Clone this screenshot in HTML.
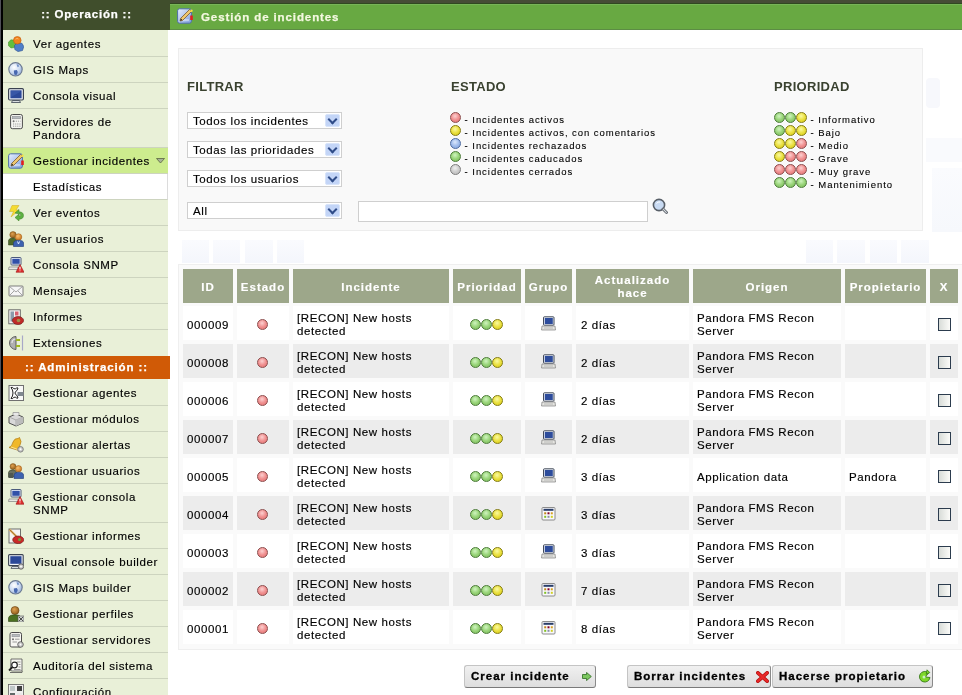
<!DOCTYPE html>
<html><head><meta charset="utf-8">
<style>
*{margin:0;padding:0;box-sizing:border-box}
html,body{width:962px;height:695px;overflow:hidden;background:#fff}
body{will-change:transform}
.mi,.td,.sel{-webkit-text-stroke:0.15px #000}
#title{-webkit-text-stroke:0.25px #f4f8e0}
#ophead,#adhead{-webkit-text-stroke:0.25px #fff}
body{position:relative;font-family:"Liberation Sans",sans-serif;font-size:11.5px;letter-spacing:0.6px;color:#000}
#side{position:absolute;left:0;top:0;width:168px;height:695px;background:#e9f0d8}
#lborder{z-index:5;position:absolute;left:0;top:0;width:3px;height:695px;background:#000;border-left:1px solid #505058}
#ophead{position:absolute;left:0;top:0;width:170px;height:30px;background:#404e2c;color:#fff;font-weight:bold;text-align:center;line-height:29px;letter-spacing:0.8px;padding-left:3px}
.menu{position:absolute;left:3px;width:165px}
.mi{position:relative;height:26px;border-bottom:1px solid #cdd4bf;padding:7px 0 0 30px;line-height:13px;white-space:nowrap}
.mi.two{height:39px}
.mi.act{background:#cdec8e}
.mi.sub{background:#fff;border-right:1px solid #dcdcdc}
.mi svg{position:absolute;left:5px;top:5px}
#adhead{position:absolute;left:3px;top:356px;width:167px;height:23px;background:#d05a06;color:#fff;font-weight:bold;text-align:center;line-height:22px;letter-spacing:0.9px}
#topstrip{position:absolute;left:170px;top:0;width:792px;height:4px;background:#464c36;box-shadow:inset 0 -1px 0 #304820}
#title{position:absolute;left:170px;top:4px;width:792px;height:26px;background:#68a942;box-shadow:inset 0 1px 0 #78b458,inset 0 -1px 0 #5c8c44;color:#f4f8e0;font-weight:bold;letter-spacing:0.9px;line-height:13px;padding:7px 0 0 31px}
#title svg{position:absolute;left:7px;top:4px}
#filter{position:absolute;left:178px;top:48px;width:745px;height:183px;background:#f9f9f9;border:1px solid #ededed}
.h2{position:absolute;font-weight:bold;font-size:13px;letter-spacing:0.3px;color:#3a4230;line-height:13px}
.sel{position:absolute;left:187px;width:155px;height:17px;background:#fff;border:1px solid #cfcfcf;padding:1px 0 0 5px;line-height:14px;white-space:nowrap}
.sel .btn{position:absolute;right:1px;top:1px;width:15px;height:13px;background:#c3d5f7;border:1px solid #d8e4fa;border-radius:2px}
.sel .btn:after{content:"";position:absolute;left:3px;top:1px;width:5px;height:5px;border-right:2px solid #2f4c88;border-bottom:2px solid #2f4c88;transform:rotate(45deg)}
#txt{position:absolute;left:358px;top:201px;width:290px;height:21px;background:#fff;border:1px solid #cfcfcf}
.leg{position:absolute;font-size:9.5px;letter-spacing:0.95px;line-height:13px;white-space:nowrap}
.leg i{font-style:normal;position:relative;top:1px;-webkit-text-stroke:0.1px #000}
.dot{display:inline-block;width:11px;height:11px;border-radius:50%;vertical-align:top}
.r{background:radial-gradient(circle at 45% 35%,#fcd0d0 0,#f09090 50%,#e07070 100%);border:1px solid #8c4c4c}
.y{background:radial-gradient(circle at 45% 35%,#fafaa0 0,#eae040 50%,#d4c810 100%);border:1px solid #847c10}
.g{background:radial-gradient(circle at 45% 35%,#d0f4c0 0,#98d478 50%,#78b858 100%);border:1px solid #4c7c38}
.b{background:radial-gradient(circle at 45% 35%,#dce8fc 0,#a0bcec 50%,#80a0d8 100%);border:1px solid #4c6aa0}
.k{background:radial-gradient(circle at 45% 35%,#f0f0f0 0,#cccccc 50%,#b8b8b8 100%);border:1px solid #7c7c7c}
#tbl{position:absolute;left:178px;top:264px;width:790px;height:386px;border:1px solid #efefef;border-right:none;background:#fafafa}
table{position:absolute;left:183px;top:269px;border-collapse:separate;border-spacing:0}
td,th{position:absolute}
.th{position:absolute;background:#9da78a;color:#fff;font-weight:bold;text-align:center;letter-spacing:1px;line-height:13px;display:flex;align-items:center;justify-content:center;padding-top:2px;-webkit-text-stroke:0.15px #fff}
.td{position:absolute;height:34px;line-height:13px;display:flex;align-items:center;white-space:nowrap;padding:4px 0 0 4px}
.w{background:#fff}
.gr{background:#ececec}
.c{justify-content:center;padding:2px 1px 0 0}
.td svg{margin-top:-2px}
.cb{margin-left:1px;width:13px;height:13px;border:1px solid #2c3c4e;background:linear-gradient(90deg,#d8dcd8,#fbfbf8)}
.bt{position:absolute;top:665px;height:23px;border:1px solid #c4c4c4;border-right-color:#8a8a8a;border-bottom-color:#7a7a7a;border-radius:3px;background:linear-gradient(#f0f0f0,#dedede);font-weight:bold;letter-spacing:1px;line-height:13px;padding:4px 0 0 6px;white-space:nowrap;-webkit-text-stroke:0.3px #000}
.bt svg{position:absolute;top:3px}
</style></head><body>
<svg width="0" height="0" style="position:absolute">
<defs>
<radialGradient id="gGlobe" cx="40%" cy="35%" r="70%"><stop offset="0" stop-color="#ffffff"/><stop offset="0.6" stop-color="#c8d8f0"/><stop offset="1" stop-color="#8aa4d0"/></radialGradient>
<linearGradient id="gEdit" x1="0" y1="0" x2="1" y2="1"><stop offset="0" stop-color="#e8f0ff"/><stop offset="1" stop-color="#7f9fdc"/></linearGradient>
<radialGradient id="gOr" cx="40%" cy="35%" r="70%"><stop offset="0" stop-color="#f8c070"/><stop offset="1" stop-color="#c8701a"/></radialGradient>
<radialGradient id="gBrown" cx="40%" cy="35%" r="70%"><stop offset="0" stop-color="#e0a050"/><stop offset="1" stop-color="#8a5a18"/></radialGradient>
<symbol id="agents" viewBox="0 0 16 16">
 <path d="M0.5 6 L3 3.8 L6.5 4.2 L8 7.5 L6.5 11.5 L3 12 L0.3 9.5Z" fill="#62be3e" stroke="#3c8a24" stroke-width="0.5"/>
 <path d="M6.5 9.5 L9 7 L14 7.3 L15.8 10.5 L14.5 14.5 L10 15.6 L6.8 13.5Z" fill="#4f7ec8" stroke="#2c4f90" stroke-width="0.6"/>
 <circle cx="9.3" cy="4.3" r="3.8" fill="#f2841c" stroke="#c05a10" stroke-width="0.6"/>
 <path d="M7.5 3.2 Q9 1.8 10.5 3" stroke="#ffc080" stroke-width="0.8" fill="none"/>
</symbol>
<symbol id="globe" viewBox="0 0 16 16">
 <circle cx="7.5" cy="7.3" r="6.7" fill="url(#gGlobe)" stroke="#6a7890" stroke-width="1.1"/>
 <path d="M5.8 8.5 L8.8 8 L9.8 10 L8.8 12.8 L6.8 13 L6 11Z" fill="#4868b0"/>
 <path d="M8.5 2.2 L10.5 2.5 L11 4.5 L9.6 5.2Z" fill="#7090c8"/>
</symbol>
<symbol id="monitor" viewBox="0 0 16 16">
 <rect x="0.6" y="0.6" width="14.8" height="11.4" rx="1.2" fill="#eef2f8" stroke="#3a4250" stroke-width="1.2"/>
 <rect x="2.4" y="2.3" width="11.2" height="8" fill="#2b4898"/>
 <path d="M3 3 L12 3 L12 4 L3 9Z" fill="#4060b0" opacity="0.6"/>
 <path d="M4.5 12.5 L11.5 12.5 L12.5 14.5 L3.5 14.5Z" fill="#d8dce0" stroke="#3a4250" stroke-width="0.8"/>
</symbol>
<symbol id="servers" viewBox="0 0 16 16">
 <rect x="2.6" y="0.5" width="11.8" height="14.2" rx="1.8" fill="#f6f6f2" stroke="#4a4a4a" stroke-width="1"/>
 <rect x="4.5" y="2.2" width="8" height="2.6" fill="#b8bcc0" stroke="#808488" stroke-width="0.5"/>
 <circle cx="5.6" cy="7.3" r="1" fill="#707070"/>
 <path d="M7.8 7.2 H12.5 M5 10 H12.5 M5 12.2 H12.5" stroke="#909090" stroke-width="0.9" stroke-dasharray="1.2 0.9"/>
</symbol>
<symbol id="edit" viewBox="0 0 16 16">
 <rect x="0.6" y="0.8" width="13.8" height="14.4" rx="2" fill="url(#gEdit)" stroke="#4f6ea8" stroke-width="1"/>
 <path d="M2.5 12 H12" stroke="#fff" stroke-width="1" opacity="0.8"/>
 <path d="M3.5 10.5 L12.5 1.5 L14.5 3.5 L5.5 12.5 L3 13Z" fill="#f0c870" stroke="#6a4a20" stroke-width="0.7"/>
 <path d="M3.2 12.8 L4 10.6 L5.4 12Z" fill="#202020"/>
 <rect x="13.2" y="7.5" width="2.6" height="4.5" fill="#e02020"/>
 <circle cx="14.5" cy="2.8" r="1.2" fill="#f8e040"/>
</symbol>
<symbol id="events" viewBox="0 0 16 16">
 <path d="M4 0.5 L11 0.5 L8 5 L11 5 L3 12 L5.5 6.5 L1.5 6.5Z" fill="#f4dc30" stroke="#d0a820" stroke-width="0.5"/>
 <path d="M7 8 L11 4.5 L11 6.8 Q15.5 7 15.5 10.5 Q15.5 14 11 14.2 L11 16 L7 12.5 L11 9 L11 11 Q13 10.8 12.8 10 Q12.5 8.8 11 9 Z" fill="#5cb040" stroke="#3c8028" stroke-width="0.5"/>
</symbol>
<symbol id="users" viewBox="0 0 16 16">
 <circle cx="5" cy="3.8" r="3.2" fill="url(#gBrown)" stroke="#7a4a10" stroke-width="0.5"/>
 <path d="M0.5 14 L0.5 9.5 Q0.8 7 5 7 Q8 7 8.5 9 L8.5 14Z" fill="#4e6a2a" stroke="#2a3a14" stroke-width="0.5"/>
 <circle cx="10.5" cy="6" r="3.3" fill="url(#gOr)" stroke="#9a5a10" stroke-width="0.5"/>
 <path d="M5.5 15.5 L5.5 12 Q5.8 9.3 10.5 9.3 Q15.5 9.3 15.5 12 L15.5 15.5Z" fill="#3d62b0" stroke="#1e3a78" stroke-width="0.6"/>
 <path d="M9.5 10.5 L10.5 13 L11.5 10.5" stroke="#e8f0ff" stroke-width="0.9" fill="none"/>
</symbol>
<symbol id="snmp" viewBox="0 0 16 16">
 <rect x="3" y="0.5" width="10" height="7.5" rx="0.8" fill="#eef2fa" stroke="#3a4a70" stroke-width="0.9"/>
 <rect x="4.3" y="1.8" width="7.4" height="5" fill="#3050a8"/>
 <path d="M1 10 H10 L10.5 12.5 H0.5Z" fill="#e8e8e4" stroke="#707070" stroke-width="0.6"/>
 <path d="M12 7.5 L16 15.2 L8 15.2Z" fill="#e03030" stroke="#a01010" stroke-width="0.6"/>
 <path d="M12 9.8 V12.5 M12 13.4 V14.3" stroke="#fff" stroke-width="1.1"/>
</symbol>
<symbol id="mail" viewBox="0 0 16 16">
 <rect x="1" y="3" width="14" height="10" rx="0.8" fill="#f6f6f6" stroke="#707070" stroke-width="0.9"/>
 <path d="M1.5 3.5 L8 9 L14.5 3.5 M1.5 12.5 L6 8 M14.5 12.5 L10 8" stroke="#909090" stroke-width="0.8" fill="none"/>
</symbol>
<symbol id="reports" viewBox="0 0 16 16">
 <rect x="0.8" y="0.8" width="11.5" height="14" fill="#f4f4f4" stroke="#606060" stroke-width="0.9"/>
 <rect x="2.5" y="2.5" width="3.5" height="10" fill="#8a9aac"/>
 <rect x="7" y="2.5" width="3.5" height="4" fill="#d86070"/>
 <ellipse cx="10" cy="11.5" rx="5.6" ry="4" fill="#c02a28" stroke="#6a1010" stroke-width="0.6"/>
 <circle cx="10.5" cy="11.5" r="1.8" fill="#a0904a"/>
</symbol>
<symbol id="ext" viewBox="0 0 16 16">
 <path d="M8 1.5 A6.5 6.5 0 0 0 8 14.5Z" fill="#b0b0b0" stroke="#505050" stroke-width="0.9"/>
 <path d="M7.5 4 A4 4 0 0 0 4 8" stroke="#e8e8e8" stroke-width="1.2" fill="none"/>
 <path d="M8 5 H12 M8 11 H12" stroke="#a0b820" stroke-width="2"/>
 <path d="M14.5 0.5 V15.5" stroke="#a8a8c8" stroke-width="1.2"/>
</symbol>
<symbol id="magents" viewBox="0 0 16 16">
 <rect x="1" y="0.5" width="14.5" height="15" fill="#f8f8f8" stroke="#707070" stroke-width="1"/>
 <path d="M3 2.5 Q5 1.8 5.5 3.5 L7.5 4 Q8.5 2 10 3 L9 5.5 Q7 6.5 7 8 Q7 9.5 9 10.5 L10 13 Q8.5 14 7.5 12 L5.5 12.5 Q5 14.2 3 13.5 L4.5 11 Q5.5 8 4.5 5Z" fill="#fff" stroke="#202020" stroke-width="1"/>
 <rect x="9.5" y="7" width="6" height="4" fill="#808890"/>
</symbol>
<symbol id="modules" viewBox="0 0 16 16">
 <path d="M1 6 L8 3 L15 6 L15 12 L8 15 L1 12Z" fill="#d8d8d8" stroke="#505050" stroke-width="1"/>
 <path d="M1 6 L8 9 L15 6 M8 9 V15" stroke="#9a9a9a" stroke-width="0.7" fill="none"/>
 <path d="M8 9 L15 6 L15 12 L8 15Z" fill="#bcbcbc"/>
 <path d="M5 4 V1.5 H11 V4.3" fill="#e8e8e8" stroke="#909090" stroke-width="0.7"/>
</symbol>
<symbol id="alerts" viewBox="0 0 16 16">
 <path d="M1 10.5 Q4 9.5 5 5 Q6.5 1 10 1.5 L11.5 0.5 L12 2 Q14 4 12 8 Q10.5 11 11 13.5Z" fill="#f0b828" stroke="#b07810" stroke-width="0.7"/>
 <path d="M3 10 L10.5 12.8" stroke="#fff0b0" stroke-width="0.8"/>
 <circle cx="12.5" cy="12.3" r="2.8" fill="#c8c8c8" stroke="#707070" stroke-width="0.8"/>
 <circle cx="12.5" cy="12.3" r="1" fill="#fff"/>
</symbol>
<symbol id="musers" viewBox="0 0 16 16">
 <circle cx="5" cy="3.6" r="3" fill="url(#gBrown)" stroke="#7a4a10" stroke-width="0.5"/>
 <path d="M0.5 14 L0.5 9.5 Q0.8 6.8 5 6.8 Q8 6.8 8.5 9 L8.5 14Z" fill="#6a7060" stroke="#2a3a14" stroke-width="0.5"/>
 <circle cx="10.5" cy="5.8" r="3.2" fill="url(#gOr)" stroke="#9a5a10" stroke-width="0.5"/>
 <path d="M6 15.5 L6 12 Q6.3 9.2 10.5 9.2 Q15.5 9.2 15.5 12 L15.5 15.5Z" fill="#3d62b0" stroke="#1e3a78" stroke-width="0.6"/>
 <rect x="0.5" y="10" width="4.5" height="5" fill="#505850"/>
</symbol>
<symbol id="mreports" viewBox="0 0 16 16">
 <rect x="1" y="1" width="11.5" height="14" fill="#f4f4f4" stroke="#606060" stroke-width="0.9"/>
 <path d="M1.5 1.5 L9 9" stroke="#e0b060" stroke-width="2.2"/>
 <path d="M1.5 1.5 L9 9" stroke="#704010" stroke-width="0.5"/>
 <ellipse cx="10.2" cy="11.8" rx="5.5" ry="3.8" fill="#c82a28" stroke="#6a1010" stroke-width="0.6"/>
 <circle cx="11.5" cy="11.5" r="1.5" fill="#70a040"/>
</symbol>
<symbol id="vcb" viewBox="0 0 16 16">
 <rect x="0.6" y="0.6" width="14.6" height="11" rx="1" fill="#eef2f8" stroke="#3a4250" stroke-width="1.1"/>
 <rect x="2.3" y="2.2" width="11.2" height="7.6" fill="#2b4898"/>
 <path d="M4 12.5 H10 L11 14.5 H3Z" fill="#d8dce0" stroke="#3a4250" stroke-width="0.7"/>
 <circle cx="13" cy="12.5" r="2.7" fill="#c8c8c8" stroke="#505050" stroke-width="0.8"/>
 <circle cx="13" cy="12.5" r="0.9" fill="#fff"/>
</symbol>
<symbol id="profiles" viewBox="0 0 16 16">
 <circle cx="7" cy="4.5" r="4" fill="url(#gBrown)" stroke="#6a4010" stroke-width="0.6"/>
 <path d="M0.5 15.5 L0.5 12 Q1 8.8 7 8.8 Q12.5 8.8 13 12 L13 15.5Z" fill="#4a7020" stroke="#2a4010" stroke-width="0.6"/>
 <rect x="10" y="10" width="6" height="6" fill="#d0d4d0" stroke="#505050" stroke-width="0.6"/>
 <path d="M11 11 L15 15 M15 11 L11 15" stroke="#404040" stroke-width="0.9"/>
</symbol>
<symbol id="mservers" viewBox="0 0 16 16">
 <rect x="2" y="0.5" width="11.5" height="14.5" rx="1.8" fill="#f6f6f2" stroke="#4a4a4a" stroke-width="1"/>
 <rect x="4" y="2.2" width="7.5" height="2.6" fill="#b8bcc0" stroke="#808488" stroke-width="0.5"/>
 <circle cx="5" cy="7.3" r="1" fill="#707070"/>
 <path d="M7 7.2 H11.5 M4.5 10 H9" stroke="#909090" stroke-width="0.9"/>
 <circle cx="12.5" cy="12.5" r="2.8" fill="#c8c8c8" stroke="#505050" stroke-width="0.8"/>
 <circle cx="12.5" cy="12.5" r="0.9" fill="#fff"/>
</symbol>
<symbol id="audit" viewBox="0 0 16 16">
 <path d="M3 1 H14 V13 H4 Q2.5 13 2.5 11.5Z" fill="#f6f6f0" stroke="#505050" stroke-width="0.8"/>
 <path d="M2 14.5 H14 Q15 14 14 13" fill="none" stroke="#505050" stroke-width="0.8"/>
 <path d="M9 4 H12.5 M10.5 6.5 H12.5 M10.5 9 H12.5 M6 11.5 H12.5" stroke="#808080" stroke-width="0.8"/>
 <circle cx="6.5" cy="7" r="2.8" fill="#fff" stroke="#202020" stroke-width="1.2"/>
 <path d="M4.5 9 L1 12.5" stroke="#202020" stroke-width="1.8"/>
</symbol>
<symbol id="config" viewBox="0 0 16 16">
 <rect x="0.5" y="0.5" width="15" height="15" fill="#f0f0f0" stroke="#606060" stroke-width="0.8"/>
 <rect x="2" y="2" width="5" height="5" fill="#c0c8c8"/>
 <rect x="9" y="2" width="5" height="5" fill="#404040"/>
 <rect x="2" y="9" width="5" height="5" fill="#606868"/>
 <rect x="9" y="9" width="5" height="5" fill="#e8e8e8"/>
</symbol>
<symbol id="ipc" viewBox="0 0 15 15">
 <rect x="2.5" y="0.8" width="10.5" height="8.4" rx="0.8" fill="#e8eef8" stroke="#303848" stroke-width="0.9"/>
 <rect x="3.8" y="2" width="8" height="6" fill="#2d4c9c"/>
 <path d="M1 10 H14 L14.5 14 H0.5Z" fill="#e4e4e0" stroke="#808080" stroke-width="0.7"/>
 <path d="M3 12 H12" stroke="#b0b0b0" stroke-width="0.8"/>
</symbol>
<symbol id="ical" viewBox="0 0 15 15">
 <rect x="1" y="1.5" width="13" height="12.5" rx="1" fill="#f8f8fc" stroke="#808080" stroke-width="0.9"/>
 <rect x="2.5" y="2.8" width="10" height="2" fill="#283c68"/>
 <rect x="3.2" y="6.3" width="2" height="2" fill="#c08818"/><rect x="6.5" y="6.3" width="2" height="2" fill="#800028"/><rect x="9.8" y="6.3" width="2" height="2" fill="#d8a020"/>
 <rect x="3.2" y="9.8" width="2" height="2" fill="#80c020"/><rect x="6.5" y="9.8" width="2" height="2" fill="#8890a8"/><rect x="9.8" y="9.8" width="2" height="2" fill="#d0d020"/>
</symbol>
<symbol id="arrow" viewBox="0 0 11 10">
 <path d="M0.5 2.8 H5 V0.5 L10.3 5 L5 9.5 V7.2 H0.5Z" fill="#7cc860" stroke="#2c6a20" stroke-width="0.9" stroke-linejoin="round"/>
</symbol>
<symbol id="xred" viewBox="0 0 14 13">
 <path d="M2 2 L12 11 M12 2 L2 11" stroke="#b01010" stroke-width="4" stroke-linecap="round"/>
 <path d="M2 2 L12 11 M12 2 L2 11" stroke="#e82828" stroke-width="2.6" stroke-linecap="round"/>
</symbol>
<symbol id="refresh" viewBox="0 0 13 14">
 <path d="M10.5 4 A5.3 5.3 0 1 0 12 8.5 L7.5 8 L8.8 6.2 Z" fill="#7ed82a" stroke="#2c7010" stroke-width="0.8"/>
 <path d="M9 0.8 L11.8 3.6 L8.2 5.2Z" fill="#7ed82a" stroke="#2c7010" stroke-width="0.7"/>
 <circle cx="6" cy="8" r="1.5" fill="#c8f0c0"/>
</symbol>
<symbol id="search" viewBox="0 0 16 16">
 <circle cx="7" cy="7" r="5.6" fill="#c8daf2" stroke="#585f68" stroke-width="1.6"/>
 <path d="M4.5 5.5 Q6 3.5 8 4" stroke="#fff" stroke-width="1" fill="none"/>
 <path d="M11 11 L14.5 14.5" stroke="#585f68" stroke-width="2.8" stroke-linecap="round"/>
 <path d="M11.2 11.2 L14.3 14.3" stroke="#d8dce0" stroke-width="1.2" stroke-linecap="round"/>
</symbol>
</defs>
</svg>
<div id="side"></div>
<div id="lborder"></div>
<div id="ophead">:: Operación ::</div>
<div class="menu" style="top:31px">
 <div class="mi"><svg width="16" height="16"><use href="#agents"/></svg>Ver agentes</div>
 <div class="mi"><svg width="16" height="16"><use href="#globe"/></svg>GIS Maps</div>
 <div class="mi"><svg width="16" height="16"><use href="#monitor"/></svg>Consola visual</div>
 <div class="mi two"><svg width="16" height="16"><use href="#servers"/></svg>Servidores de<br>Pandora</div>
 <div class="mi act"><svg width="16" height="16"><use href="#edit"/></svg>Gestionar incidentes<svg style="left:153px;top:10px" width="9" height="6"><path d="M0.5 0.5 L8.5 0.5 L4.5 5Z" fill="#a8b498" stroke="#5a6440" stroke-width="0.8"/></svg></div>
 <div class="mi sub">Estadísticas</div>
 <div class="mi"><svg width="16" height="16"><use href="#events"/></svg>Ver eventos</div>
 <div class="mi"><svg width="16" height="16"><use href="#users"/></svg>Ver usuarios</div>
 <div class="mi"><svg width="16" height="16"><use href="#snmp"/></svg>Consola SNMP</div>
 <div class="mi"><svg width="16" height="16"><use href="#mail"/></svg>Mensajes</div>
 <div class="mi"><svg width="16" height="16"><use href="#reports"/></svg>Informes</div>
 <div class="mi" style="border-bottom:none"><svg width="16" height="16"><use href="#ext"/></svg>Extensiones</div>
</div>
<div id="adhead">:: Administración ::</div>
<div class="menu" style="top:380px">
 <div class="mi"><svg width="16" height="16"><use href="#magents"/></svg>Gestionar agentes</div>
 <div class="mi"><svg width="16" height="16"><use href="#modules"/></svg>Gestionar módulos</div>
 <div class="mi"><svg width="16" height="16"><use href="#alerts"/></svg>Gestionar alertas</div>
 <div class="mi"><svg width="16" height="16"><use href="#musers"/></svg>Gestionar usuarios</div>
 <div class="mi two"><svg width="16" height="16"><use href="#snmp"/></svg>Gestionar consola<br>SNMP</div>
 <div class="mi"><svg width="16" height="16"><use href="#mreports"/></svg>Gestionar informes</div>
 <div class="mi"><svg width="16" height="16"><use href="#vcb"/></svg>Visual console builder</div>
 <div class="mi"><svg width="16" height="16"><use href="#globe"/></svg>GIS Maps builder</div>
 <div class="mi"><svg width="16" height="16"><use href="#profiles"/></svg>Gestionar perfiles</div>
 <div class="mi"><svg width="16" height="16"><use href="#mservers"/></svg>Gestionar servidores</div>
 <div class="mi"><svg width="16" height="16"><use href="#audit"/></svg>Auditoría del sistema</div>
 <div class="mi"><svg width="16" height="16"><use href="#config"/></svg>Configuración</div>
</div>

<div id="topstrip"></div>
<div id="title"><svg width="16" height="16"><use href="#edit"/></svg>Gestión de incidentes</div>

<div id="filter"></div>
<div class="h2" style="left:187px;top:80px">FILTRAR</div>
<div class="h2" style="left:451px;top:80px">ESTADO</div>
<div class="h2" style="left:774px;top:80px">PRIORIDAD</div>
<div class="sel" style="top:112px">Todos los incidentes<span class="btn"></span></div>
<div class="sel" style="top:141px">Todas las prioridades<span class="btn"></span></div>
<div class="sel" style="top:170px">Todos los usuarios<span class="btn"></span></div>
<div class="sel" style="top:202px">All<span class="btn"></span></div>
<div id="txt"></div>
<svg style="position:absolute;left:652px;top:198px" width="16" height="16"><use href="#search"/></svg>

<div class="leg" style="left:450px;top:112px">
<div><span class="dot r"></span><i> - Incidentes activos</i></div>
<div><span class="dot y"></span><i> - Incidentes activos, con comentarios</i></div>
<div><span class="dot b"></span><i> - Incidentes rechazados</i></div>
<div><span class="dot g"></span><i> - Incidentes caducados</i></div>
<div><span class="dot k"></span><i> - Incidentes cerrados</i></div>
</div>
<div class="leg" style="left:774px;top:112px">
<div><span class="dot g"></span><span class="dot g"></span><span class="dot y"></span><i> - Informativo</i></div>
<div><span class="dot g"></span><span class="dot y"></span><span class="dot y"></span><i> - Bajo</i></div>
<div><span class="dot y"></span><span class="dot y"></span><span class="dot r"></span><i> - Medio</i></div>
<div><span class="dot y"></span><span class="dot r"></span><span class="dot r"></span><i> - Grave</i></div>
<div><span class="dot r"></span><span class="dot r"></span><span class="dot r"></span><i> - Muy grave</i></div>
<div><span class="dot g"></span><span class="dot g"></span><span class="dot g"></span><i> - Mantenimiento</i></div>
</div>

<div style="position:absolute;left:182px;top:240px;width:27px;height:23px;background:linear-gradient(#fafbfe,#f4f6fc)"></div>
<div style="position:absolute;left:213px;top:240px;width:27px;height:23px;background:linear-gradient(#fafbfe,#f4f6fc)"></div>
<div style="position:absolute;left:245px;top:240px;width:28px;height:23px;background:linear-gradient(#fafbfe,#f4f6fc)"></div>
<div style="position:absolute;left:277px;top:240px;width:27px;height:23px;background:linear-gradient(#fafbfe,#f4f6fc)"></div>
<div style="position:absolute;left:806px;top:240px;width:27px;height:23px;background:linear-gradient(#fafbfe,#f4f6fc)"></div>
<div style="position:absolute;left:837px;top:240px;width:28px;height:23px;background:linear-gradient(#fafbfe,#f4f6fc)"></div>
<div style="position:absolute;left:870px;top:240px;width:27px;height:23px;background:linear-gradient(#fafbfe,#f4f6fc)"></div>
<div style="position:absolute;left:901px;top:240px;width:28px;height:23px;background:linear-gradient(#fafbfe,#f4f6fc)"></div>
<div style="position:absolute;left:926px;top:78px;width:14px;height:30px;background:#f7f8fc;border-radius:4px"></div>
<div style="position:absolute;left:932px;top:168px;width:30px;height:64px;background:linear-gradient(#fafbfe,#f6f8fc)"></div>
<div style="position:absolute;left:926px;top:138px;width:36px;height:24px;background:#f9fafd"></div>
<div id="tbl"></div>
<div id="rows">
<div class="th" style="left:183px;top:269px;width:50px;height:34px">ID</div>
<div class="th" style="left:237px;top:269px;width:52px;height:34px">Estado</div>
<div class="th" style="left:293px;top:269px;width:156px;height:34px">Incidente</div>
<div class="th" style="left:453px;top:269px;width:68px;height:34px">Prioridad</div>
<div class="th" style="left:525px;top:269px;width:47px;height:34px">Grupo</div>
<div class="th" style="left:576px;top:269px;width:113px;height:34px">Actualizado<br>hace</div>
<div class="th" style="left:693px;top:269px;width:148px;height:34px">Origen</div>
<div class="th" style="left:845px;top:269px;width:81px;height:34px">Propietario</div>
<div class="th" style="left:930px;top:269px;width:28px;height:34px">X</div>
<div class="td w" style="left:183px;top:306px;width:50px">000009</div>
<div class="td w c" style="left:237px;top:306px;width:52px"><span class="dot r"></span></div>
<div class="td w" style="left:293px;top:306px;width:156px">[RECON] New hosts<br>detected</div>
<div class="td w c" style="left:453px;top:306px;width:68px"><span class="dot g"></span><span class="dot g"></span><span class="dot y"></span></div>
<div class="td w c" style="left:525px;top:306px;width:47px"><svg width="15" height="15"><use href="#ipc"/></svg></div>
<div class="td w" style="left:576px;top:306px;width:113px"><span style="margin-left:1px"></span>2 días</div>
<div class="td w" style="left:693px;top:306px;width:148px">Pandora FMS Recon<br>Server</div>
<div class="td w" style="left:845px;top:306px;width:81px"></div>
<div class="td w c" style="left:930px;top:306px;width:28px"><span class="cb"></span></div>
<div class="td gr" style="left:183px;top:344px;width:50px">000008</div>
<div class="td gr c" style="left:237px;top:344px;width:52px"><span class="dot r"></span></div>
<div class="td gr" style="left:293px;top:344px;width:156px">[RECON] New hosts<br>detected</div>
<div class="td gr c" style="left:453px;top:344px;width:68px"><span class="dot g"></span><span class="dot g"></span><span class="dot y"></span></div>
<div class="td gr c" style="left:525px;top:344px;width:47px"><svg width="15" height="15"><use href="#ipc"/></svg></div>
<div class="td gr" style="left:576px;top:344px;width:113px"><span style="margin-left:1px"></span>2 días</div>
<div class="td gr" style="left:693px;top:344px;width:148px">Pandora FMS Recon<br>Server</div>
<div class="td gr" style="left:845px;top:344px;width:81px"></div>
<div class="td gr c" style="left:930px;top:344px;width:28px"><span class="cb"></span></div>
<div class="td w" style="left:183px;top:382px;width:50px">000006</div>
<div class="td w c" style="left:237px;top:382px;width:52px"><span class="dot r"></span></div>
<div class="td w" style="left:293px;top:382px;width:156px">[RECON] New hosts<br>detected</div>
<div class="td w c" style="left:453px;top:382px;width:68px"><span class="dot g"></span><span class="dot g"></span><span class="dot y"></span></div>
<div class="td w c" style="left:525px;top:382px;width:47px"><svg width="15" height="15"><use href="#ipc"/></svg></div>
<div class="td w" style="left:576px;top:382px;width:113px"><span style="margin-left:1px"></span>2 días</div>
<div class="td w" style="left:693px;top:382px;width:148px">Pandora FMS Recon<br>Server</div>
<div class="td w" style="left:845px;top:382px;width:81px"></div>
<div class="td w c" style="left:930px;top:382px;width:28px"><span class="cb"></span></div>
<div class="td gr" style="left:183px;top:420px;width:50px">000007</div>
<div class="td gr c" style="left:237px;top:420px;width:52px"><span class="dot r"></span></div>
<div class="td gr" style="left:293px;top:420px;width:156px">[RECON] New hosts<br>detected</div>
<div class="td gr c" style="left:453px;top:420px;width:68px"><span class="dot g"></span><span class="dot g"></span><span class="dot y"></span></div>
<div class="td gr c" style="left:525px;top:420px;width:47px"><svg width="15" height="15"><use href="#ipc"/></svg></div>
<div class="td gr" style="left:576px;top:420px;width:113px"><span style="margin-left:1px"></span>2 días</div>
<div class="td gr" style="left:693px;top:420px;width:148px">Pandora FMS Recon<br>Server</div>
<div class="td gr" style="left:845px;top:420px;width:81px"></div>
<div class="td gr c" style="left:930px;top:420px;width:28px"><span class="cb"></span></div>
<div class="td w" style="left:183px;top:458px;width:50px">000005</div>
<div class="td w c" style="left:237px;top:458px;width:52px"><span class="dot r"></span></div>
<div class="td w" style="left:293px;top:458px;width:156px">[RECON] New hosts<br>detected</div>
<div class="td w c" style="left:453px;top:458px;width:68px"><span class="dot g"></span><span class="dot g"></span><span class="dot y"></span></div>
<div class="td w c" style="left:525px;top:458px;width:47px"><svg width="15" height="15"><use href="#ipc"/></svg></div>
<div class="td w" style="left:576px;top:458px;width:113px"><span style="margin-left:1px"></span>3 días</div>
<div class="td w" style="left:693px;top:458px;width:148px">Application data</div>
<div class="td w" style="left:845px;top:458px;width:81px">Pandora</div>
<div class="td w c" style="left:930px;top:458px;width:28px"><span class="cb"></span></div>
<div class="td gr" style="left:183px;top:496px;width:50px">000004</div>
<div class="td gr c" style="left:237px;top:496px;width:52px"><span class="dot r"></span></div>
<div class="td gr" style="left:293px;top:496px;width:156px">[RECON] New hosts<br>detected</div>
<div class="td gr c" style="left:453px;top:496px;width:68px"><span class="dot g"></span><span class="dot g"></span><span class="dot y"></span></div>
<div class="td gr c" style="left:525px;top:496px;width:47px"><svg width="15" height="15"><use href="#ical"/></svg></div>
<div class="td gr" style="left:576px;top:496px;width:113px"><span style="margin-left:1px"></span>3 días</div>
<div class="td gr" style="left:693px;top:496px;width:148px">Pandora FMS Recon<br>Server</div>
<div class="td gr" style="left:845px;top:496px;width:81px"></div>
<div class="td gr c" style="left:930px;top:496px;width:28px"><span class="cb"></span></div>
<div class="td w" style="left:183px;top:534px;width:50px">000003</div>
<div class="td w c" style="left:237px;top:534px;width:52px"><span class="dot r"></span></div>
<div class="td w" style="left:293px;top:534px;width:156px">[RECON] New hosts<br>detected</div>
<div class="td w c" style="left:453px;top:534px;width:68px"><span class="dot g"></span><span class="dot g"></span><span class="dot y"></span></div>
<div class="td w c" style="left:525px;top:534px;width:47px"><svg width="15" height="15"><use href="#ipc"/></svg></div>
<div class="td w" style="left:576px;top:534px;width:113px"><span style="margin-left:1px"></span>3 días</div>
<div class="td w" style="left:693px;top:534px;width:148px">Pandora FMS Recon<br>Server</div>
<div class="td w" style="left:845px;top:534px;width:81px"></div>
<div class="td w c" style="left:930px;top:534px;width:28px"><span class="cb"></span></div>
<div class="td gr" style="left:183px;top:572px;width:50px">000002</div>
<div class="td gr c" style="left:237px;top:572px;width:52px"><span class="dot r"></span></div>
<div class="td gr" style="left:293px;top:572px;width:156px">[RECON] New hosts<br>detected</div>
<div class="td gr c" style="left:453px;top:572px;width:68px"><span class="dot g"></span><span class="dot g"></span><span class="dot y"></span></div>
<div class="td gr c" style="left:525px;top:572px;width:47px"><svg width="15" height="15"><use href="#ical"/></svg></div>
<div class="td gr" style="left:576px;top:572px;width:113px"><span style="margin-left:1px"></span>7 días</div>
<div class="td gr" style="left:693px;top:572px;width:148px">Pandora FMS Recon<br>Server</div>
<div class="td gr" style="left:845px;top:572px;width:81px"></div>
<div class="td gr c" style="left:930px;top:572px;width:28px"><span class="cb"></span></div>
<div class="td w" style="left:183px;top:610px;width:50px">000001</div>
<div class="td w c" style="left:237px;top:610px;width:52px"><span class="dot r"></span></div>
<div class="td w" style="left:293px;top:610px;width:156px">[RECON] New hosts<br>detected</div>
<div class="td w c" style="left:453px;top:610px;width:68px"><span class="dot g"></span><span class="dot g"></span><span class="dot y"></span></div>
<div class="td w c" style="left:525px;top:610px;width:47px"><svg width="15" height="15"><use href="#ical"/></svg></div>
<div class="td w" style="left:576px;top:610px;width:113px"><span style="margin-left:1px"></span>8 días</div>
<div class="td w" style="left:693px;top:610px;width:148px">Pandora FMS Recon<br>Server</div>
<div class="td w" style="left:845px;top:610px;width:81px"></div>
<div class="td w c" style="left:930px;top:610px;width:28px"><span class="cb"></span></div>
</div><!--rows-->

<div class="bt" style="left:464px;width:132px">Crear incidente<svg style="left:117px;top:6px" width="10" height="9"><use href="#arrow"/></svg></div>
<div class="bt" style="left:627px;width:144px">Borrar incidentes<svg style="left:128px;top:5px" width="13" height="12"><use href="#xred"/></svg></div>
<div class="bt" style="left:772px;width:161px">Hacerse propietario<svg style="left:145px;top:3px" width="13" height="14"><use href="#refresh"/></svg></div>
</body></html>
